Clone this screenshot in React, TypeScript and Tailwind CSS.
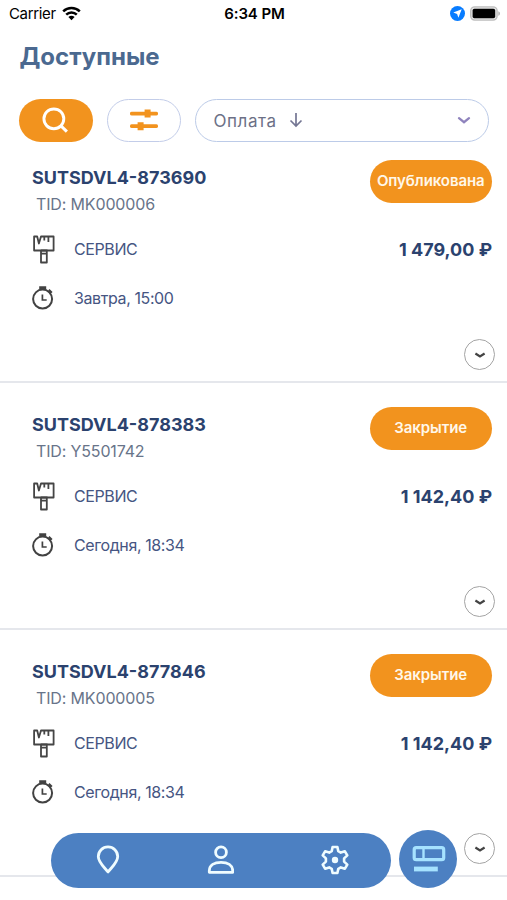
import { useState } from "react";

const orders = [
  {
    id: "SUTSDVL4-873690",
    tid: "MK000006",
    time: "Завтра, 15:00",
    price: "1 479,00 ₽",
    status: "Опубликована",
  },
  {
    id: "SUTSDVL4-878383",
    tid: "Y5501742",
    time: "Сегодня, 18:34",
    price: "1 142,40 ₽",
    status: "Закрытие",
  },
  {
    id: "SUTSDVL4-877846",
    tid: "MK000005",
    time: "Сегодня, 18:34",
    price: "1 142,40 ₽",
    status: "Закрытие",
  },
];

type Order = (typeof orders)[number];

function StatusBar() {
  return (
    <div className="grid h-7 grid-cols-3 items-center pr-[7px] pl-[9px] text-black">
      <div className="flex items-center gap-[6px]">
        <span className="text-[15px] leading-5 tracking-[-0.35px]">Carrier</span>
        <svg className="-mt-[2px]" width="19" height="15" viewBox="0 0 19 15" fill="none" stroke="currentColor" strokeWidth="2.5">
          <path d="M1.2 5.3a12 12 0 0 1 16.6 0" />
          <path d="M4.2 8.7a7.6 7.6 0 0 1 10.6 0" />
          <path d="M9.5 14.2 6.4 11.1a4.5 4.5 0 0 1 6.2 0Z" fill="currentColor" stroke="none" />
        </svg>
      </div>
      <span className="text-center text-[15px] leading-5 font-semibold tracking-[-0.1px]">6:34 PM</span>
      <div className="-mt-px flex items-center justify-end gap-[5px]">
        <svg width="15" height="15" viewBox="0 0 15 15">
          <circle cx="7.5" cy="7.5" r="7.5" fill="#087cff" />
          <path d="m11.7 3.3-3.3 8.4-1.3-3.8-3.8-1.3Z" fill="#fff" />
        </svg>
        <svg width="30" height="15" viewBox="0 0 30 15">
          <rect x="0.7" y="0.9" width="26.4" height="13.2" rx="4" fill="#e4e4e4" stroke="#bdbdbd" strokeWidth="1.4" />
          <rect x="2.6" y="2.8" width="22.6" height="9.4" rx="1.8" fill="#000" />
          <path d="M28.4 5.2c2 .8 2 3.8 0 4.6Z" fill="#aaa" />
        </svg>
      </div>
    </div>
  );
}

function Filters() {
  return (
    <div className="flex gap-[14.5px] pr-[18px] pl-[19px]">
      <button className="flex h-[43px] w-[73.5px] items-center justify-center rounded-full bg-[#f2931e]">
        <svg width="27" height="27" viewBox="0 0 28 28" fill="none" stroke="#fff">
          <circle cx="12.3" cy="12.3" r="10.3" strokeWidth="3" />
          <path d="m19.4 19.4 6.4 6.1" strokeWidth="3.2" />
        </svg>
      </button>
      <button className="flex h-[43px] w-[73.5px] items-center justify-center rounded-full border border-[#c3cde9]">
        <svg className="-mt-px" width="28" height="22" viewBox="0 0 28 22" fill="none" stroke="#f2931e">
          <path d="M1.8 4.600h24.4M1.8 17.2h24.4" strokeWidth="3.7" strokeLinecap="round" />
          <path d="M14.6 4.600h6M7.6 17.2h6" strokeWidth="8" />
        </svg>
      </button>
      <button className="flex h-[43px] flex-1 items-center rounded-full border border-[#bccbe8] px-[17.5px] text-[#6c7086]">
        <span className="pt-[2px] text-[17px] leading-6 tracking-[0.55px]">Оплата</span>
        <svg className="ml-[12px]" width="14" height="16" viewBox="0 0 14 16" fill="none" stroke="#747693" strokeWidth="1.7">
          <path d="M7 1v13M1.5 8.5 7 14l5.5-5.5" />
        </svg>
        <svg className="ml-auto" width="14" height="9" viewBox="0 0 14 9" fill="none" stroke="#8f83bd" strokeWidth="2.3" strokeLinecap="round">
          <path d="m2 2.2 5 4 5-4" />
        </svg>
      </button>
    </div>
  );
}

function BrushIcon() {
  return (
    <svg width="22" height="29" viewBox="0 0 22 29" fill="none" stroke="#454545" strokeWidth="1.8" strokeLinejoin="round">
      <path d="M1.1 1.5h3.1l1.7 7 2.1-7h12.6v14H1.1Z" />
      <path d="M11.3 1.5v4M15.4 1.5v5.500M7.7 15.5h6.8M8 15.5v12h5.8v-12M8 18.7h5.8" />
    </svg>
  );
}

function StopwatchIcon() {
  return (
    <svg width="22" height="24" viewBox="0 0 22 24" fill="none" stroke="#424242" strokeWidth="2">
      <circle cx="10.6" cy="13.1" r="9.500" />
      <path d="M7.2 1.8h7M10.7 2v2" strokeWidth="2.9" />
      <path d="m16.8 3.8 3 3M17.2 6.9l1.8-1.8" strokeWidth="2.1" />
      <path d="M10.4 8.5v5.500h4.300" strokeWidth="1.7" />
    </svg>
  );
}

function OrderCard({ order }: { order: Order }) {
  const [open, setOpen] = useState(false);

  return (
    <div className="flex h-[247px] shrink-0 flex-col border-b-2 border-[#e5e7ec] pt-[24.5px] pr-[15px] pl-[32px]">
      <div className="flex h-[60px] justify-between">
        <div className="pt-[6px] whitespace-nowrap">
          <div className="text-[18px] leading-6 font-bold text-[#2b426e]">{order.id}</div>
          <div className="mt-[2px] pl-1 text-[16px] leading-6 tracking-[-0.15px] text-[#687489]">TID: {order.tid}</div>
        </div>
        <div className="flex h-[43px] w-[122.5px] shrink-0 items-center justify-center rounded-full bg-[#f2931e] text-[15px] font-semibold tracking-[-0.08px] text-[#fff7e9]">
          {order.status}
        </div>
      </div>
      <div className="mt-[14px] flex h-[30px] items-center justify-between">
        <div className="flex items-center gap-[19px] pl-px">
          <BrushIcon />
          <span className="text-[16px] tracking-[-0.4px] text-[#465582]">СЕРВИС</span>
        </div>
        <span className="text-[18px] font-bold whitespace-nowrap text-[#2b426e]">{order.price}</span>
      </div>
      <div className="mt-[19px] flex h-[30px] items-center gap-[20px]">
        <StopwatchIcon />
        <span className="text-[16px] tracking-[-0.4px] text-[#465582]">{order.time}</span>
      </div>
      <button
        className="mt-[26px] -mr-[3px] flex size-[31px] items-center justify-center self-end rounded-full border-[1.5px] border-[#a4a4a4]"
        onClick={() => setOpen(!open)}
      >
        <svg width="12" height="8" viewBox="0 0 12 8" fill="none" stroke="#444" strokeWidth="2.2">
          <path d="m1.4 2.500 4.600 3 4.600-3" />
        </svg>
      </button>
    </div>
  );
}

function TabBar() {
  return (
    <div className="absolute top-[830px] left-[51px] flex items-center gap-[8px]">
      <div className="mt-[2px] flex h-[55px] w-[340px] items-center justify-between rounded-full bg-[#4c80c2] pr-[41px] pl-[45px]">
        <svg width="24" height="30" viewBox="0 0 24 30" fill="none" stroke="#effcff" strokeWidth="2.8" strokeLinejoin="round">
          <path d="M12 27C8.700 22.600 2.300 17.500 2.300 11.500a9.700 9.700 0 0 1 19.400 0C21.700 17.500 15.300 22.600 12 27Z" />
        </svg>
        <svg width="28" height="30" viewBox="0 0 28 30" fill="none" stroke="#effcff" strokeWidth="2.8" strokeLinejoin="round">
          <circle cx="15" cy="7.300" r="5.400" />
          <path d="M3.300 27.300v-1.500C3.300 20.200 8.500 17.300 15 17.300s11.700 2.900 11.700 8.500v1.500Z" />
        </svg>
        <svg width="30" height="30" viewBox="0 0 30 30" fill="none" stroke="#effcff" strokeWidth="2.6" strokeLinejoin="round">
          <path d="M12.600 2h4.800l.9 4.200 2.500 1.400 4.100-1.300 2.400 4.100-3.200 3v3.200l3.200 3-2.400 4.100-4.100-1.300-2.500 1.400-.9 4.200h-4.800l-.9-4.200-2.500-1.400-4.100 1.300-2.400-4.100 3.200-3v-3.200l-3.200-3 2.400-4.100 4.100 1.300 2.500-1.400Z" />
          <circle cx="15" cy="15" r="3.200" fill="#effcff" stroke="none" />
        </svg>
      </div>
      <div className="flex size-[58px] items-center justify-center rounded-full bg-[#4c80c2]">
        <svg className="-mt-[2px] ml-px" width="34" height="27" viewBox="0 0 34 27" fill="none" stroke="#a6e2ff">
          <rect x="2.200" y="2.700" width="29.500" height="12" rx="2" strokeWidth="3.200" />
          <path d="M11.500 2.500v12" strokeWidth="2.400" />
          <path d="M2 24h23.800" strokeWidth="4.800" />
        </svg>
      </div>
    </div>
  );
}

export default function App() {
  return (
    <div className="relative flex h-[900px] w-[507px] flex-col overflow-hidden bg-white font-['Inter','Noto_Sans',sans-serif]">
      <StatusBar />
      <h1 className="mt-[12px] mb-[24.5px] pl-[19.5px] text-[24px] leading-[34px] font-bold text-[#4b6990]">Доступные</h1>
      <Filters />
      <div className="-mt-[6px] flex flex-col">
        {orders.map((order) => (
          <OrderCard key={order.id} order={order} />
        ))}
      </div>
      <TabBar />
    </div>
  );
}
